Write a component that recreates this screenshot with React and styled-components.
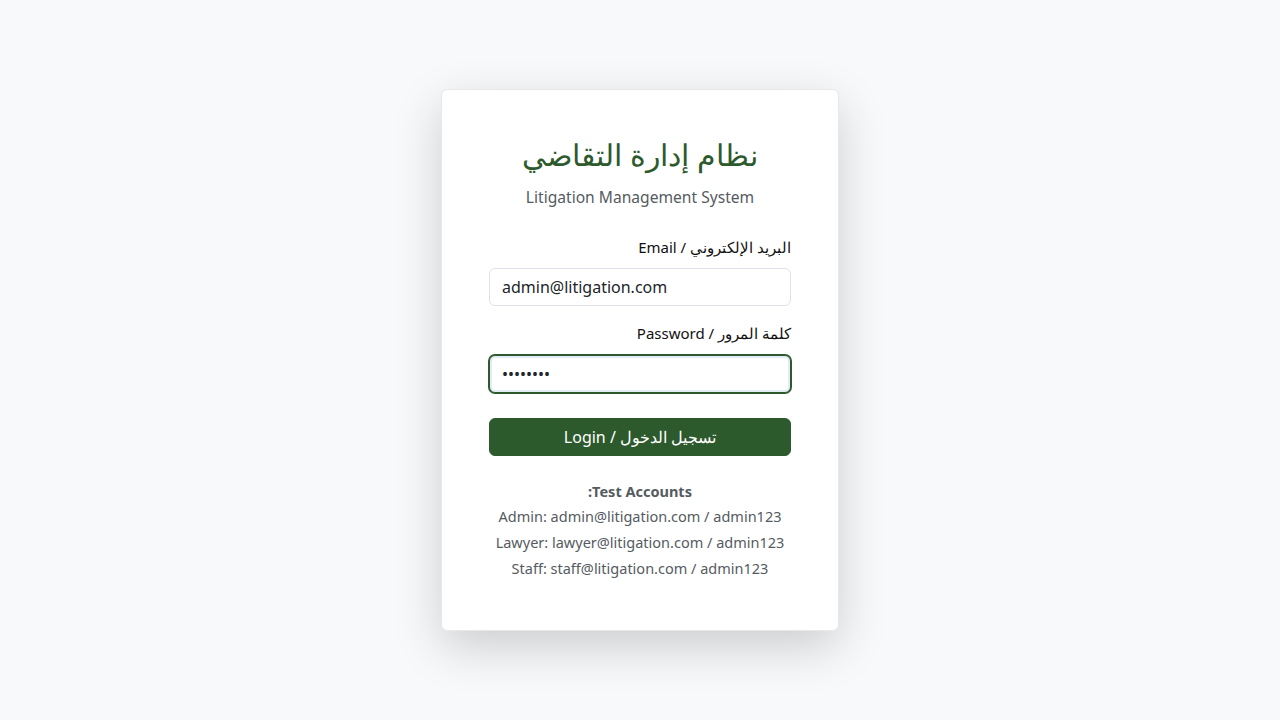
import React from "react";
import styled, { createGlobalStyle } from "styled-components";

const Global = createGlobalStyle`
  * { box-sizing: border-box; }
  html, body { margin: 0; padding: 0; }
  body {
    background: #f8f9fa;
    font-family: "Noto Sans", sans-serif;
    color: #212529;
    font-size: 16px;
    line-height: 1.5;
  }
`;

const Page = styled.div`
  direction: rtl;
  min-height: 720px;
  display: flex;
  align-items: center;
  justify-content: center;
`;

const Card = styled.div`
  width: 398px;
  background: #fff;
  border: 1px solid rgba(0, 0, 0, 0.09);
  border-radius: 6px;
  box-shadow: 0 1rem 3rem rgba(0, 0, 0, 0.175);
  padding: 46px 47px 51px;
`;

const Header = styled.div`
  text-align: center;
  margin-bottom: 27px;
`;

const Title = styled.h1`
  margin: 0 0 12px;
  font-size: 30px;
  font-weight: 500;
  line-height: 1.25;
  color: #2d5a2d;
`;

const Subtitle = styled.p`
  margin: 0;
  color: #555b61;
  font-size: 15.6px;
`;

const Field = styled.div`
  margin-bottom: 16px;
`;

const Label = styled.label`
  display: block;
  margin-bottom: 10px;
  font-size: 15px;
  color: #111;
`;

const Input = styled.input`
  display: block;
  width: 100%;
  height: 38px;
  padding: 6px 12px;
  direction: ltr;
  font-family: "Noto Sans", sans-serif;
  font-size: 16px;
  color: #212529;
  background: #fff;
  border: 1px solid ${(p) => (p.$focused ? "#2d5a2d" : "#dee2e6")};
  border-radius: 6px;
  outline: none;
  box-shadow: ${(p) =>
    p.$focused ? "0 0 0 1px #2d5a2d, inset 0 0 0 2px #e3ecf6" : "none"};
`;

const Button = styled.button`
  display: block;
  width: 100%;
  height: 38px;
  margin-top: 25px;
  background: #2d5a2d;
  color: #fff;
  border: 1px solid #2d5a2d;
  border-radius: 6px;
  font-family: "Noto Sans", sans-serif;
  font-size: 16px;
  cursor: pointer;
`;

const Accounts = styled.div`
  margin-top: 25px;
  text-align: center;
  color: #555b61;
  font-size: 14.5px;
  line-height: 21px;
`;

const AccLine = styled.p`
  margin: 0 0 5px;
  font-weight: ${(p) => (p.$bold ? 700 : 400)};
  &:first-child { margin-bottom: 4px; }
  &:last-child { margin-bottom: 0; }
`;

export default function App() {
  return (
    <>
      <Global />
      <Page>
        <Card>
          <Header>
            <Title>نظام إدارة التقاضي</Title>
            <Subtitle>Litigation Management System</Subtitle>
          </Header>
          <Field>
            <Label>البريد الإلكتروني / Email</Label>
            <Input type="email" defaultValue="admin@litigation.com" />
          </Field>
          <Field>
            <Label>كلمة المرور / Password</Label>
            <Input type="password" defaultValue="admin123" $focused />
          </Field>
          <Button>تسجيل الدخول / Login</Button>
          <Accounts>
            <AccLine $bold>Test Accounts:</AccLine>
            <AccLine>Admin: admin@litigation.com / admin123</AccLine>
            <AccLine>Lawyer: lawyer@litigation.com / admin123</AccLine>
            <AccLine>Staff: staff@litigation.com / admin123</AccLine>
          </Accounts>
        </Card>
      </Page>
    </>
  );
}
